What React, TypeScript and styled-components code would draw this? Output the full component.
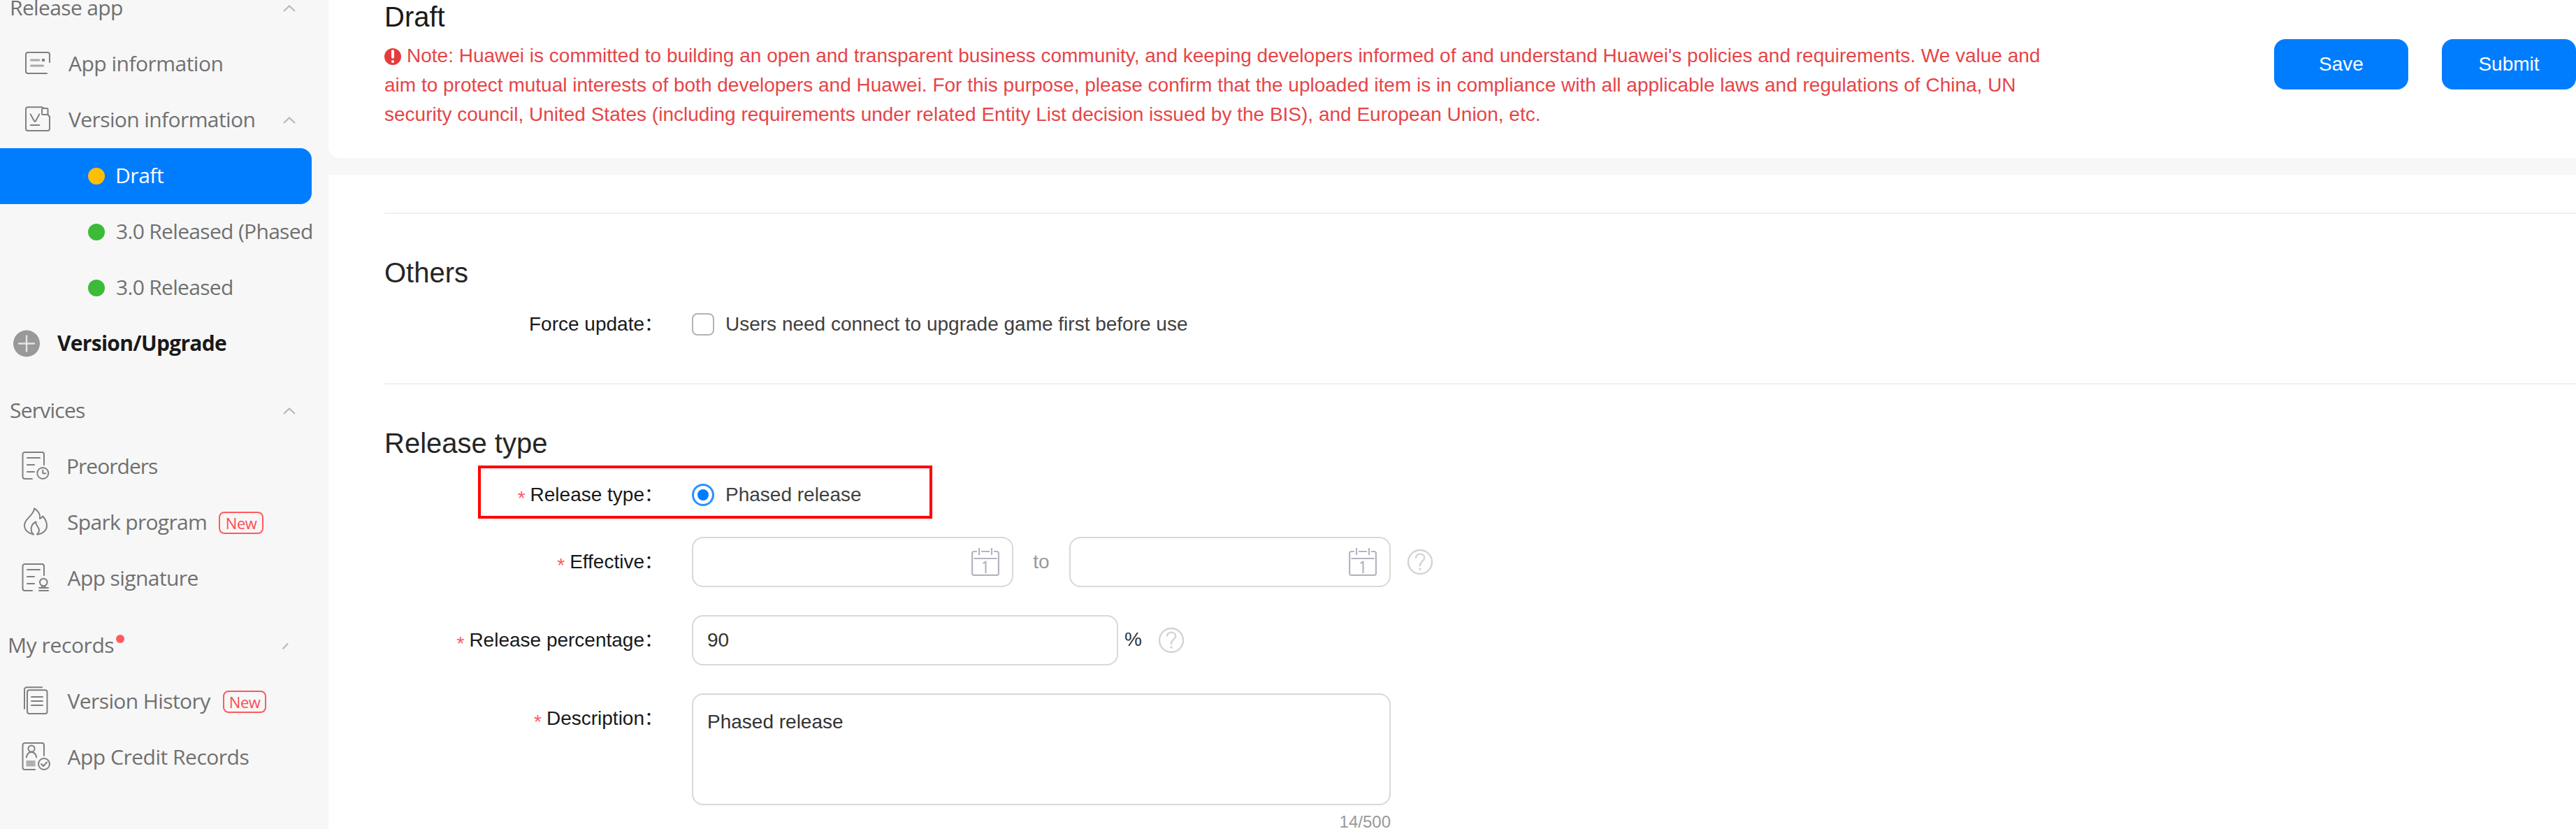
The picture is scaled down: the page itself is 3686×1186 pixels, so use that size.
import React from "react";
import styled, { createGlobalStyle, css } from "styled-components";

const sans = '"Liberation Sans", Arial, "Noto Sans CJK SC", sans-serif';
const humanist = '"Open Sans", "Segoe UI", "Noto Sans CJK SC", sans-serif';

const GlobalStyle = createGlobalStyle`
  *, *::before, *::after { box-sizing: border-box; }
  html, body { margin: 0; padding: 0; background: #f7f7f7; }
  body { overflow: hidden; }
`;

const Page = styled.div`
  display: flex;
  width: 3686px;
  height: 1186px;
  overflow: hidden;
  background: #f7f7f7;
  font-family: ${sans};
  font-size: 28px;
  color: #191919;
`;

/* ---------- sidebar ---------- */

const Sidebar = styled.nav`
  display: flex;
  flex-direction: column;
  flex: none;
  width: 470px;
  padding-right: 24px;
  font-family: ${humanist};
  font-size: 30px;
  color: #707070;
`;

const Group = styled.div<{ $first?: boolean }>`
  display: flex;
  flex-direction: column;
  margin-top: ${(p) => (p.$first ? "-28px" : "16px")};
`;

const NavRow = styled.div<{ $indent: number; $active?: boolean }>`
  display: flex;
  align-items: center;
  flex: none;
  height: 80px;
  padding-left: ${(p) => p.$indent}px;
  white-space: nowrap;
  ${(p) =>
    p.$active &&
    css`
      background: #007dff;
      color: #fff;
      border-radius: 0 16px 16px 0;
    `}
`;

const NavText = styled.span<{ $track: number; $gap?: number; $strong?: boolean }>`
  margin-left: ${(p) => p.$gap ?? 0}px;
  padding-bottom: 3px;
  line-height: 40px;
  letter-spacing: ${(p) => p.$track}px;
  ${(p) =>
    p.$strong &&
    css`
      font-weight: 700;
      color: #1a1a1a;
    `}
`;

const NavIcon = styled.svg`
  flex: none;
  width: 44px;
  height: 44px;
  fill: none;
  stroke: #808080;
  stroke-width: 2;
  stroke-linecap: round;
  stroke-linejoin: round;
`;

const Arrow = styled.svg`
  flex: none;
  width: 20px;
  height: 12px;
  margin-left: auto;
  margin-right: 22px;
  fill: none;
  stroke: #b8b8b8;
  stroke-width: 2.2;
`;

const StatusDot = styled.i<{ $color: string }>`
  flex: none;
  width: 24px;
  height: 24px;
  border-radius: 50%;
  background: ${(p) => p.$color};
`;

const UnreadDot = styled.i`
  width: 12px;
  height: 12px;
  margin: 0 0 20px 3px;
  border-radius: 50%;
  background: #ff5a5f;
`;

const NewBadge = styled.span<{ $width: number; $gap: number }>`
  display: flex;
  align-items: center;
  justify-content: center;
  width: ${(p) => p.$width}px;
  height: 32px;
  margin-left: ${(p) => p.$gap}px;
  border: 2px solid #ff5a5f;
  border-radius: 8px;
  font-size: 22px;
  line-height: 28px;
  letter-spacing: -0.4px;
  color: #ff4a52;
`;

/* ---------- content ---------- */

const Content = styled.main`
  display: flex;
  flex-direction: column;
  flex: 1;
  min-width: 0;
  gap: 24px;
`;

const HeaderCard = styled.header`
  display: flex;
  justify-content: space-between;
  flex: none;
  height: 226px;
  padding-left: 80px;
  background: #fff;
  border-bottom-left-radius: 16px;
`;

const HeaderText = styled.div`
  display: flex;
  flex-direction: column;
`;

const PageTitle = styled.h1`
  margin: 0;
  font-size: 40px;
  font-weight: 400;
  line-height: 48px;
`;

const Note = styled.p`
  margin: 11px 0 0;
  line-height: 42px;
  white-space: nowrap;
  color: #e64548;
`;

const AlertIcon = styled.svg`
  width: 24px;
  height: 24px;
  margin-right: 8px;
  vertical-align: -4px;
`;

const Actions = styled.div`
  display: flex;
  gap: 48px;
  padding-top: 56px;
`;

const PrimaryButton = styled.button`
  width: 192px;
  height: 72px;
  padding: 0;
  border: 0;
  border-radius: 16px;
  background: #007dff;
  color: #fff;
  font: 28px/72px ${sans};
`;

const FormCard = styled.section`
  display: flex;
  flex-direction: column;
  flex: 1;
  padding: 54px 0 0 80px;
  background: #fff;
`;

const Section = styled.div`
  display: flex;
  flex-direction: column;
  padding: 54px 0 48px;
  border-top: 2px solid #f0f0f0;
`;

const SectionTitle = styled.h2`
  margin: 0;
  font-size: 40px;
  font-weight: 400;
  line-height: 60px;
  color: #262626;
`;

const FormRow = styled.div<{ $gap: number; $top?: boolean }>`
  position: relative;
  display: flex;
  align-items: ${(p) => (p.$top ? "flex-start" : "center")};
  min-height: 72px;
  margin-top: ${(p) => p.$gap}px;
  line-height: 72px;
`;

const Highlight = styled.div`
  position: absolute;
  left: 134px;
  top: -6px;
  width: 650px;
  height: 76px;
  border: 4px solid #ff0000;
`;

const LabelBox = styled.label`
  display: flex;
  justify-content: flex-end;
  flex: none;
  width: 400px;
  height: 72px;
  margin-right: 40px;
  white-space: nowrap;
`;

const Colon = styled.span`
  display: inline-block;
  width: 28px;
  font: 26px/1 "Noto Sans CJK SC", sans-serif;
`;

const Star = styled.span`
  padding-top: 5px;
  margin-right: 7px;
  color: #ff5a5f;
`;

const OptionText = styled.span`
  margin-left: 16px;
  color: #404040;
`;

const Checkbox = styled.span`
  width: 32px;
  height: 32px;
  border: 2px solid #b3b3b3;
  border-radius: 8px;
  background: #fff;
`;

const Radio = styled.span`
  display: flex;
  align-items: center;
  justify-content: center;
  width: 32px;
  height: 32px;
  border: 3px solid #2a91ff;
  border-radius: 50%;

  &::after {
    content: "";
    width: 16px;
    height: 16px;
    border-radius: 50%;
    background: #007dff;
  }
`;

const Field = styled.div<{ $width: number; $tall?: boolean }>`
  display: flex;
  align-items: ${(p) => (p.$tall ? "flex-start" : "center")};
  width: ${(p) => p.$width}px;
  height: ${(p) => (p.$tall ? 160 : 72)}px;
  padding: ${(p) => (p.$tall ? "18px" : "0")} 18px 0 20px;
  border: 2px solid #d8d8d8;
  border-radius: 16px;
  background: #fff;
  line-height: 42px;
  color: #333;
`;

const CalendarIcon = styled.svg`
  width: 40px;
  height: 40px;
  margin-left: auto;
  fill: none;
  stroke: #b3b6bf;
  stroke-width: 2.2;
`;

const RangeWord = styled.span`
  width: 80px;
  text-align: center;
  color: #999;
`;

const Percent = styled.span`
  margin-left: 9px;
  height: 72px;
  line-height: 70px;
  color: #333;
`;

const HelpIcon = styled.svg`
  width: 38px;
  height: 38px;
  margin-left: 23px;
  fill: none;
  stroke: #d3d3d3;
  stroke-width: 2.4;
`;

const FieldStack = styled.div`
  display: flex;
  flex-direction: column;
`;

const Counter = styled.span`
  margin-top: 6px;
  text-align: right;
  font-size: 24px;
  line-height: 36px;
  color: #999;
`;

const Label = ({ text, required }: { text: string; required?: boolean }) => (
  <LabelBox>
    {required && <Star>*</Star>}
    <span>
      {text}
      <Colon>：</Colon>
    </span>
  </LabelBox>
);

const Up = () => (
  <Arrow viewBox="0 0 20 12">
    <path d="M2 10 10 2.4 18 10" />
  </Arrow>
);

const Calendar = () => (
  <CalendarIcon viewBox="0 0 40 40">
    <path d="M8 5H3.5A2.4 2.4 0 0 0 1.1 7.4v29.1a2.4 2.4 0 0 0 2.4 2.4h33a2.4 2.4 0 0 0 2.4-2.4V7.4A2.4 2.4 0 0 0 36.5 5H32M14 5h12M11 0v10M29 0v10M3.5 15h33" />
    <path d="M16.500 21.500c2-.3 3.400-1.100 4-2.700V36" />
  </CalendarIcon>
);

const Help = () => (
  <HelpIcon viewBox="0 0 38 38">
    <circle cx="19" cy="19" r="17" />
    <path d="M13 13.500C13 9.500 15.500 7.600 19 7.600s6.200 2.200 6.200 5.400c0 4.600-6.200 5.400-6.200 10.400v1.600" />
    <circle cx="19" cy="29" r="1.700" fill="#d3d3d3" stroke="none" />
  </HelpIcon>
);

export default function App() {
  return (
    <>
      <GlobalStyle />
      <Page>
        <Sidebar>
          <Group $first>
            <NavRow $indent={14}>
              <NavText $track={-0.64}>Release app</NavText>
              <Up />
            </NavRow>
            <NavRow $indent={30}>
              <NavIcon viewBox="0 0 44 44">
                <path d="M41 19V8a3 3 0 0 0-3-3H10a3 3 0 0 0-3 3v24a3 3 0 0 0 3 3h27" />
                <path d="M14.500 16h11.500M14.500 24h17" stroke="#a8a8a8" strokeWidth="3" />
                <path d="M32 16h.01" strokeWidth="4" strokeLinecap="square" />
              </NavIcon>
              <NavText $track={-0.51} $gap={24}>App information</NavText>
            </NavRow>
            <NavRow $indent={30}>
              <NavIcon viewBox="0 0 44 44">
                <path d="M30 3.300H10a3 3 0 0 0-3 3v27.700a3 3 0 0 0 3 3h28a3 3 0 0 0 3-3V17l-2.500-3M30 3.300l3 1.500" />
                <rect x="30" y="5" width="8.500" height="9" rx="1.500" />
                <path d="M13.700 13.500 19 23.200q1 1.400 2 0l5.300-9.700M13.700 29h12.600" />
              </NavIcon>
              <NavText $track={-0.6} $gap={24}>Version information</NavText>
              <Up />
            </NavRow>
            <NavRow $indent={126} $active>
              <StatusDot $color="#ffbf00" />
              <NavText $track={-0.45} $gap={15}>Draft</NavText>
            </NavRow>
            <NavRow $indent={126}>
              <StatusDot $color="#3bbb38" />
              <NavText $track={-0.68} $gap={16}>3.0 Released (Phased</NavText>
            </NavRow>
            <NavRow $indent={126}>
              <StatusDot $color="#3bbb38" />
              <NavText $track={-0.69} $gap={16}>3.0 Released</NavText>
            </NavRow>
            <NavRow $indent={16}>
              <NavIcon viewBox="0 0 44 44">
                <circle cx="22" cy="21.500" r="19" fill="#999" stroke="none" />
                <path d="M22 10.500v22M11 21.500h22" stroke="#e4e4e4" strokeWidth="2.400" />
              </NavIcon>
              <NavText $track={-0.71} $gap={22} $strong>Version/Upgrade</NavText>
            </NavRow>
          </Group>

          <Group>
            <NavRow $indent={14}>
              <NavText $track={-0.76}>Services</NavText>
              <Up />
            </NavRow>
            <NavRow $indent={30}>
              <NavIcon viewBox="0 0 44 44">
                <path d="M33 19V4a3 3 0 0 0-3-3H5.500a3 3 0 0 0-3 3v32a3 3 0 0 0 3 3h10.500M9 9h18M9 19h10M9 29h10" />
                <circle cx="31.300" cy="31" r="8" />
                <path d="M31.300 26.500v4.800h4" />
              </NavIcon>
              <NavText $track={-0.99} $gap={21}>Preorders</NavText>
            </NavRow>
            <NavRow $indent={30}>
              <NavIcon viewBox="0 0 44 44">
                <path d="M18 38.500C10 37 5 32 5 25.500 5 15.500 18 12.500 19 1.500c5 2.500 9 8 8 14.500 2-.5 3.300-1.500 4-3.500 4 4 6 9 6 13.500 0 6.500-5 11-12.500 12.500" />
                <path d="M17.500 38.500c-5-6-3.500-14.500 4-18-1.200 4.500 4.500 7.500 4.500 12 0 2.300-1 4.300-3 6" />
              </NavIcon>
              <NavText $track={-0.68} $gap={22}>Spark program</NavText>
              <NewBadge $width={64} $gap={17}>New</NewBadge>
            </NavRow>
            <NavRow $indent={30}>
              <NavIcon viewBox="0 0 44 44">
                <path d="M33 17V4a3 3 0 0 0-3-3H5.500a3 3 0 0 0-3 3v32a3 3 0 0 0 3 3h10.500M9 9h18M9 19h10M9 29h10" />
                <circle cx="32.300" cy="27" r="5.300" />
                <path d="M31.300 32.500l-2.300 2.500M33.300 32.500l2.300 2.500M26 35h13M26 39h13" />
              </NavIcon>
              <NavText $track={-0.59} $gap={22.5}>App signature</NavText>
            </NavRow>
          </Group>

          <Group>
            <NavRow $indent={11}>
              <NavText $track={-0.4}>My records</NavText>
              <UnreadDot />
              <Arrow viewBox="0 0 20 12">
                <path d="M.5 10.500 8 2.500" />
              </Arrow>
            </NavRow>
            <NavRow $indent={30}>
              <NavIcon viewBox="0 0 44 44">
                <rect x="9" y="5.300" width="28.500" height="33.700" rx="3" />
                <path d="M30 1.300H8a3 3 0 0 0-3 3V32M15 15h16M15 21h16M15 27h16" />
              </NavIcon>
              <NavText $track={-0.6} $gap={22.5}>Version History</NavText>
              <NewBadge $width={62} $gap={18.5}>New</NewBadge>
            </NavRow>
            <NavRow $indent={30}>
              <NavIcon viewBox="0 0 44 44">
                <path d="M33 19V4a3 3 0 0 0-3-3H5.500a3 3 0 0 0-3 3v32a3 3 0 0 0 3 3H20" />
                <circle cx="15" cy="9" r="4.500" />
                <path d="M7.800 21.500c1-5 3.700-7.500 7.200-7.500s6.200 2.500 7.200 7.500" />
                <rect x="7.500" y="26" width="13" height="8.500" fill="#b0b0b0" stroke="none" />
                <circle cx="33" cy="31" r="8" />
                <path d="M29 31l3 3 5-5.500" />
              </NavIcon>
              <NavText $track={-0.49} $gap={22.5}>App Credit Records</NavText>
            </NavRow>
          </Group>
        </Sidebar>

        <Content>
          <HeaderCard>
            <HeaderText>
              <PageTitle>Draft</PageTitle>
              <Note>
                <AlertIcon viewBox="0 0 24 24">
                  <circle cx="12" cy="12" r="12" fill="#e63c3c" />
                  <path d="M12 4.300v8.400" stroke="#fff" strokeWidth="4" strokeLinecap="round" />
                  <circle cx="12" cy="19" r="2" fill="#fff" />
                </AlertIcon>
                Note: Huawei is committed to building an open and transparent business community, and keeping developers informed of and understand Huawei's policies and requirements. We value and
                <br />
                aim to protect mutual interests of both developers and Huawei. For this purpose, please confirm that the uploaded item is in compliance with all applicable laws and regulations of China, UN
                <br />
                security council, United States (including requirements under related Entity List decision issued by the BIS), and European Union, etc.
              </Note>
            </HeaderText>
            <Actions>
              <PrimaryButton>Save</PrimaryButton>
              <PrimaryButton>Submit</PrimaryButton>
            </Actions>
          </HeaderCard>

          <FormCard>
            <Section>
              <SectionTitle>Others</SectionTitle>
              <FormRow $gap={8}>
                <Label text="Force update" />
                <Checkbox />
                <OptionText>Users need connect to upgrade game first before use</OptionText>
              </FormRow>
            </Section>

            <Section>
              <SectionTitle>Release type</SectionTitle>
              <FormRow $gap={8}>
                <Label text="Release type" required />
                <Radio />
                <OptionText>Phased release</OptionText>
                <Highlight />
              </FormRow>
              <FormRow $gap={24}>
                <Label text="Effective" required />
                <Field $width={460}>
                  <Calendar />
                </Field>
                <RangeWord>to</RangeWord>
                <Field $width={460}>
                  <Calendar />
                </Field>
                <Help />
              </FormRow>
              <FormRow $gap={40}>
                <Label text="Release percentage" required />
                <Field $width={610}>90</Field>
                <Percent>%</Percent>
                <Help />
              </FormRow>
              <FormRow $gap={40} $top>
                <Label text="Description" required />
                <FieldStack>
                  <Field $width={1000} $tall>
                    Phased release
                  </Field>
                  <Counter>14/500</Counter>
                </FieldStack>
              </FormRow>
            </Section>
          </FormCard>
        </Content>
      </Page>
    </>
  );
}
